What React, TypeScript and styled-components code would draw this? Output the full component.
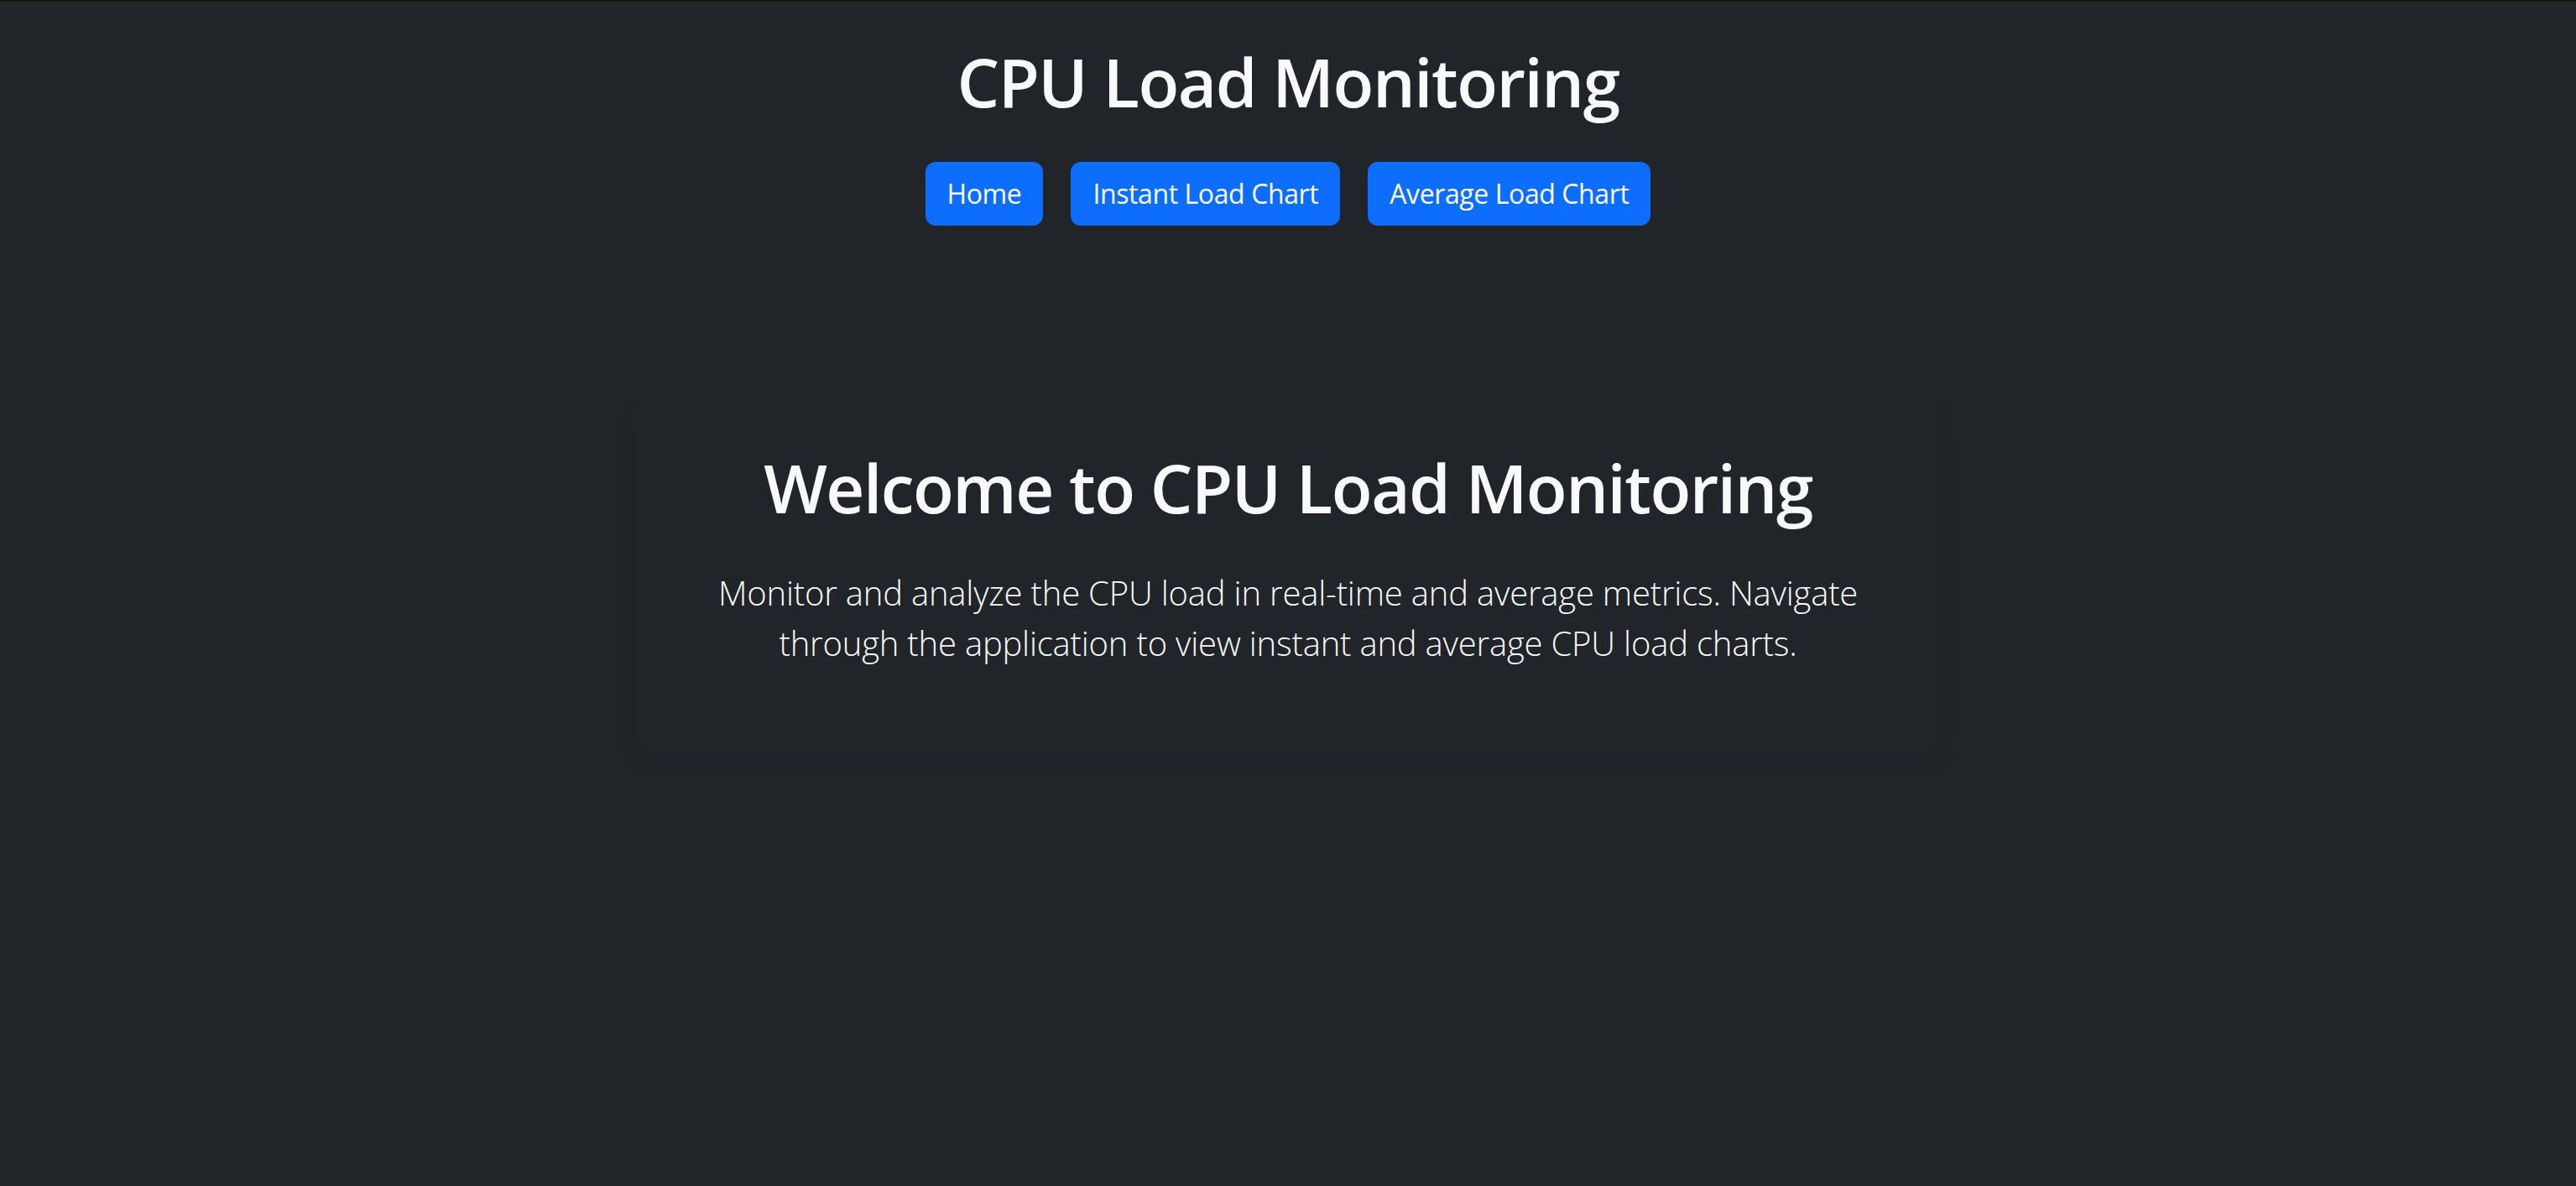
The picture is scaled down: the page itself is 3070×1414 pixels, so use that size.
import React from "react";
import styled, { createGlobalStyle } from "styled-components";

const GlobalStyle = createGlobalStyle`
  html, body {
    margin: 0;
    padding: 0;
    background: #212529;
  }
  body {
    font-family: "Open Sans", "Noto Sans", sans-serif;
    color: #f8f9fa;
  }
  * { box-sizing: border-box; }
`;

const Page = styled.div`
  min-height: 1414px;
  background: #212529;
  border-top: 2px solid #121416;
  display: flex;
  flex-direction: column;
  align-items: center;
`;

const Header = styled.header`
  display: flex;
  flex-direction: column;
  align-items: center;
  padding-top: 47px;
`;

const Title = styled.h1`
  margin: 0 0 48px;
  font-size: 80px;
  font-weight: 600;
  letter-spacing: -1.5px;
  line-height: 1.2;
  color: #f8f9fa;
`;

const Nav = styled.nav`
  display: flex;
  gap: 33px;
`;

const NavButton = styled.a`
  display: inline-flex;
  align-items: center;
  height: 76px;
  padding: 0 24px;
  background: #0d6efd;
  border: 2px solid #0d6efd;
  border-radius: 12px;
  color: #ffffff;
  font-size: 32px;
  font-weight: 400;
  letter-spacing: -0.4px;
  line-height: 1.5;
  text-decoration: none;
  cursor: pointer;
`;

const Card = styled.section`
  margin-top: 201px;
  width: 1556px;
  padding: 63px 64px 103px;
  border-radius: 20px;
  background: #212529;
  box-shadow: 0 12px 28px rgba(0, 0, 0, 0.07);
  text-align: center;
`;

const Heading = styled.h2`
  margin: 0 0 48px;
  font-size: 80px;
  font-weight: 600;
  letter-spacing: -1.5px;
  line-height: 1.2;
  color: #f8f9fa;
`;

const Lead = styled.p`
  margin: 0;
  font-size: 40px;
  font-weight: 300;
  letter-spacing: -0.2px;
  line-height: 1.5;
  color: #f8f9fa;
`;

export default function App() {
  return (
    <>
      <GlobalStyle />
      <Page>
        <Header>
          <Title>CPU Load Monitoring</Title>
          <Nav>
            <NavButton>Home</NavButton>
            <NavButton>Instant Load Chart</NavButton>
            <NavButton>Average Load Chart</NavButton>
          </Nav>
        </Header>
        <Card>
          <Heading>Welcome to CPU Load Monitoring</Heading>
          <Lead>
            Monitor and analyze the CPU load in real-time and average metrics. Navigate
            through the application to view instant and average CPU load charts.
          </Lead>
        </Card>
      </Page>
    </>
  );
}
